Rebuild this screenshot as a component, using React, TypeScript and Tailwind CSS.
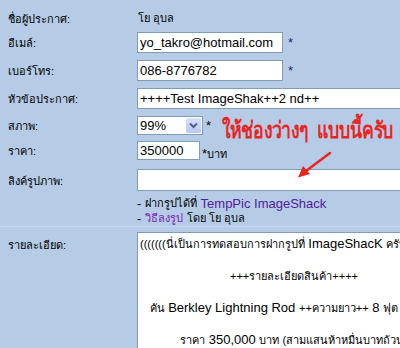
import React from 'react'

const font = { fontFamily: '"Liberation Sans", Arial, sans-serif' }

// Thai glyphs in the fallback font run wide, so they get a smaller size
function T({ children, className = '' }: { children: React.ReactNode; className?: string }) {
  return <span className={`text-[11px] ${className}`}>{children}</span>
}

function Row({ label, h, className = '', children }: { label: string; h: string; className?: string; children?: React.ReactNode }) {
  return (
    <div className={`flex items-center ${h} ${className}`}>
      <div className="w-[137px] shrink-0 pl-[8px]">
        <T>{label}</T>
      </div>
      <div className="flex items-center h-full min-w-0 flex-1">{children}</div>
    </div>
  )
}

const inputCls = 'h-full shrink-0 border border-[#7f9db9] bg-white pl-[2px] flex items-center whitespace-nowrap overflow-hidden leading-[16px]'

export default function App() {
  return (
    <div className="relative w-[400px] h-[348px] overflow-hidden bg-[#b5cbe6] text-[13px] text-black leading-none" style={font}>
      <div className="pt-[5px] flex flex-col">
        <Row label="ชื่อผู้ประกาศ:" h="h-[26px]">
          <T className="pl-[1px]">โย อุบล</T>
        </Row>
        <Row label="อีเมล์:" h="h-[21px]" className="mt-[1px]">
          <div className={`${inputCls} w-[146px]`}>yo_takro@hotmail.com</div>
          <span className="ml-[5px] text-[#1c2b6e]">*</span>
        </Row>
        <Row label="เบอร์โทร:" h="h-[21px]" className="mt-[7px]">
          <div className={`${inputCls} w-[146px]`}>086-8776782</div>
          <span className="ml-[5px] text-[#1c2b6e]">*</span>
        </Row>
        <Row label="หัวข้อประกาศ:" h="h-[21px]" className="mt-[7px]">
          <div className={`${inputCls} w-[300px]`}>++++Test ImageShak++2 nd++</div>
        </Row>
        <Row label="สภาพ:" h="h-[19px]" className="mt-[7px]">
          <div className="h-full w-[66px] shrink-0 border border-[#7f9db9] bg-white flex items-center">
            <span className="pl-[2px] flex-1">99%</span>
            <div className="h-[15px] w-[15px] mr-[1px] rounded-[2px] bg-gradient-to-b from-[#d6e2fb] to-[#b7c9f3] flex items-center justify-center">
              <svg width="9" height="7" viewBox="0 0 9 7">
                <path d="M1 1.5 L4.5 5 L8 1.5" fill="none" stroke="#4d6289" strokeWidth="2" />
              </svg>
            </div>
          </div>
          <span className="ml-[3px]">*</span>
        </Row>
        <Row label="ราคา:" h="h-[19px]" className="mt-[6px]">
          <div className={`${inputCls} w-[63px]`}>350000</div>
          <span className="ml-[2px] self-end">
            *<T>บาท</T>
          </span>
        </Row>
        <Row label="ลิงค์รูปภาพ:" h="h-[22px]" className="mt-[9px]">
          <div className={`${inputCls} w-[300px]`} />
        </Row>
        <div className="pl-[137px] pt-[5px] flex flex-col">
          <div className="h-[15px] flex items-center whitespace-nowrap">
            -&nbsp;<T>ฝากรูปได้ที่</T>&nbsp;<span className="text-[#52209c]">TempPic ImageShack</span>
          </div>
          <div className="h-[15px] flex items-center whitespace-nowrap">
            -&nbsp;<T className="text-[#7a1fb0]">วิธีลงรูป</T>&nbsp;<T>โดย โย อุบล</T>
          </div>
        </div>
        <div className="h-px bg-[#c6d8ee]" />
        <div className="flex pt-[5px]">
          <div className="w-[137px] shrink-0 pl-[8px] pt-[6px]">
            <T>รายละเอียด:</T>
          </div>
          <div className="w-[314px] shrink-0 h-[130px] border border-[#7f9db9] bg-white pt-[3px] px-[2px] text-center leading-[16px]">
            <div className="whitespace-nowrap text-left">
              <T>(((((((นี่เป็นการทดสอบการฝากรูปที่</T> ImageShacK <T>ครับ)))))))</T>
            </div>
            <div className="h-[16px]" />
            <div className="whitespace-nowrap">
              <T>+++รายละเอียดสินค้า++++</T>
            </div>
            <div className="h-[16px]" />
            <div className="whitespace-nowrap">
              <T>คัน</T> Berkley Lightning Rod <T>++ความยาว++</T> 8 <T>ฟุต , 2 ท่อน</T>
            </div>
            <div className="h-[16px]" />
            <div className="whitespace-nowrap">
              <T>ราคา</T> 350,000 <T>บาท (สามแสนห้าหมื่นบาทถ้วน)</T>
            </div>
          </div>
        </div>
      </div>

      {/* red annotation */}
      <div className="absolute left-[222px] top-[119px] origin-left scale-x-[0.77] text-[23px] font-bold text-[#e8251e] whitespace-nowrap tracking-[-0.5px]">
        ให้ช่องว่างๆ&nbsp;&nbsp;แบบนี้ครับ
      </div>
      <svg className="absolute left-[290px] top-[150px]" width="50" height="35" viewBox="0 0 50 35">
        <path d="M40 3 L16 21" stroke="#e8251e" strokeWidth="2.5" strokeLinecap="round" />
        <path d="M8 27.5 L13 16 L20 24 Z" fill="#e8251e" />
      </svg>
    </div>
  )
}
